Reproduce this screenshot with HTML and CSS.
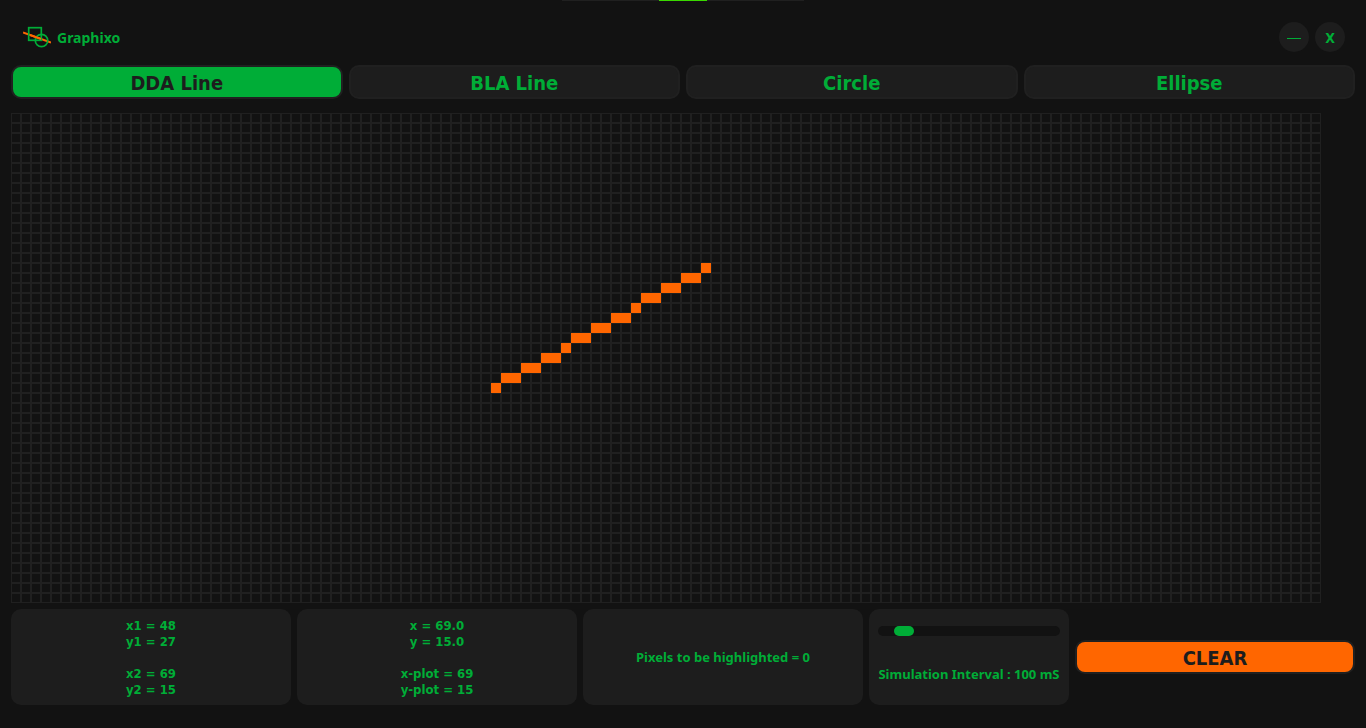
FILE: index.html
```html
<!DOCTYPE html>
<html lang="en">
<head>
<meta charset="utf-8">
<title>Graphixo</title>
<link rel="stylesheet" href="styles.css">
</head>
<body>
<div class="top-strip"><span class="top-strip-mark"></span></div>
<header class="titlebar">
  <svg class="logo" width="28" height="22" viewBox="0 0 28 22" aria-hidden="true">
    <path d="M0 6.500 L28 16.500" stroke="#ff6600" stroke-width="2" fill="none"/>
    <rect x="5.7" y="1.700" width="12.600" height="12.600" stroke="#00ad37" fill="none" stroke-width="1.700"/>
    <circle cx="18.500" cy="14.500" r="6.200" stroke="#00ad37" fill="none" stroke-width="1.700"/>
    <path d="M7 9 L18 12.929" stroke="#ff6600" stroke-width="2" fill="none"/>
  </svg>
  <h1 class="app-name">Graphixo</h1>
  <div class="window-buttons">
    <button class="window-button" type="button" aria-label="Minimize"><span class="minimize-bar"></span></button>
    <button class="window-button" type="button">X</button>
  </div>
</header>
<nav class="tabs">
  <button class="button tab tab-active" type="button">DDA Line</button>
  <button class="button tab" type="button">BLA Line</button>
  <button class="button tab" type="button">Circle</button>
  <button class="button tab" type="button">Ellipse</button>
</nav>
<main>
  <svg class="board" width="1310" height="490" role="img" aria-label="Pixel grid">
    <defs>
      <pattern id="cell" width="10" height="10" patternUnits="userSpaceOnUse">
        <rect x="0.5" y="0.5" width="9" height="9" fill="#121212" stroke="#202020"/>
      </pattern>
    </defs>
    <rect width="1310" height="490" fill="url(#cell)"/>
    <path fill="#ff6600" shape-rendering="crispEdges" d="M690 150h10v10h-10zM670 160h20v10h-20zM650 170h20v10h-20zM630 180h20v10h-20zM620 190h10v10h-10zM600 200h20v10h-20zM580 210h20v10h-20zM560 220h20v10h-20zM550 230h10v10h-10zM530 240h20v10h-20zM510 250h20v10h-20zM490 260h20v10h-20zM480 270h10v10h-10z"/>
  </svg>
  <section class="panels">
    <div class="panel">
      <p>x1 = 48<br>y1 = 27</p>
      <p>x2 = 69<br>y2 = 15</p>
    </div>
    <div class="panel">
      <p>x = 69.0<br>y = 15.0</p>
      <p>x-plot = 69<br>y-plot = 15</p>
    </div>
    <div class="panel"><p class="caption">Pixels to be highlighted = 0</p></div>
    <div class="panel panel-slider">
      <input class="slider" id="interval" type="range" min="0" max="1000" value="100">
      <label class="caption" for="interval">Simulation Interval : 100 mS</label>
    </div>
    <button class="button clear" type="button">CLEAR</button>
  </section>
</main>
</body>
</html>
```
FILE: styles.css
```css
* { box-sizing: border-box; }
body {
  margin: 0;
  padding: 22px 11px;
  background: #121212;
  color: #00ad37;
  font: bold 13px/16px "DejaVu Sans Condensed", Tahoma, "DejaVu Sans", sans-serif;
}
p, h1 { margin: 0; }
button { font: inherit; color: inherit; padding: 0; }

.top-strip {
  position: absolute;
  top: 0;
  left: 50%;
  width: 242px;
  height: 1px;
  transform: translateX(-50%);
  display: flex;
  justify-content: center;
  background: #202020;
}
.top-strip-mark { width: 48px; background: #3ad900; }

.titlebar {
  display: flex;
  align-items: center;
  padding: 0 10px 0 12px;
  gap: 6px;
}
.app-name {
  padding-top: 2px;
  font-family: "Noto Sans", Tahoma, sans-serif;
  font-size: 14px;
  line-height: 16px;
}
.window-buttons { display: flex; gap: 6px; margin-left: auto; }
.window-button {
  display: flex;
  align-items: center;
  justify-content: center;
  width: 30px;
  height: 30px;
  padding-top: 2px;
  border: 0;
  border-radius: 50%;
  background: #1d1d1d;
  font-size: 14px;
}
.minimize-bar { width: 14px; height: 1px; background: #00ad37; }

.button {
  height: 34px;
  padding-top: 1px;
  border: 2px solid #202020;
  border-radius: 10px;
  background: #1d1d1d;
  font-size: 20px;
  line-height: 24px;
}
.tabs {
  display: grid;
  grid-template-columns: repeat(4, 1fr);
  gap: 6px;
  margin: 13px 0 14px;
}
.tab-active { background: #00ad37; color: #1d1d1d; }

.board { display: block; }

.panels {
  display: grid;
  grid-template-columns: 7fr 7fr 7fr minmax(0, 5fr) 7fr;
  align-items: center;
  gap: 6px;
  margin-top: 6px;
}
.panel {
  display: flex;
  flex-direction: column;
  align-items: center;
  justify-content: center;
  gap: 16px;
  min-height: 96px;
  padding: 8px;
  border-radius: 10px;
  background: #1d1d1d;
  text-align: center;
}
.panel p { padding-top: 1px; margin-bottom: -1px; }
.panel .caption { padding-top: 0; margin-bottom: 0; }
.panel-slider { gap: 30px; padding: 9px 9px 15px; }
.caption { font-family: "Noto Sans", Tahoma, sans-serif; white-space: nowrap; }
.slider {
  appearance: none;
  width: 100%;
  height: 10px;
  margin: 0;
  border-radius: 5px;
  background: #121212;
}
.slider::-webkit-slider-thumb {
  appearance: none;
  width: 20px;
  height: 10px;
  border-radius: 5px;
  background: #00ad37;
}
.clear { background: #ff6600; color: #1d1d1d; }
```
